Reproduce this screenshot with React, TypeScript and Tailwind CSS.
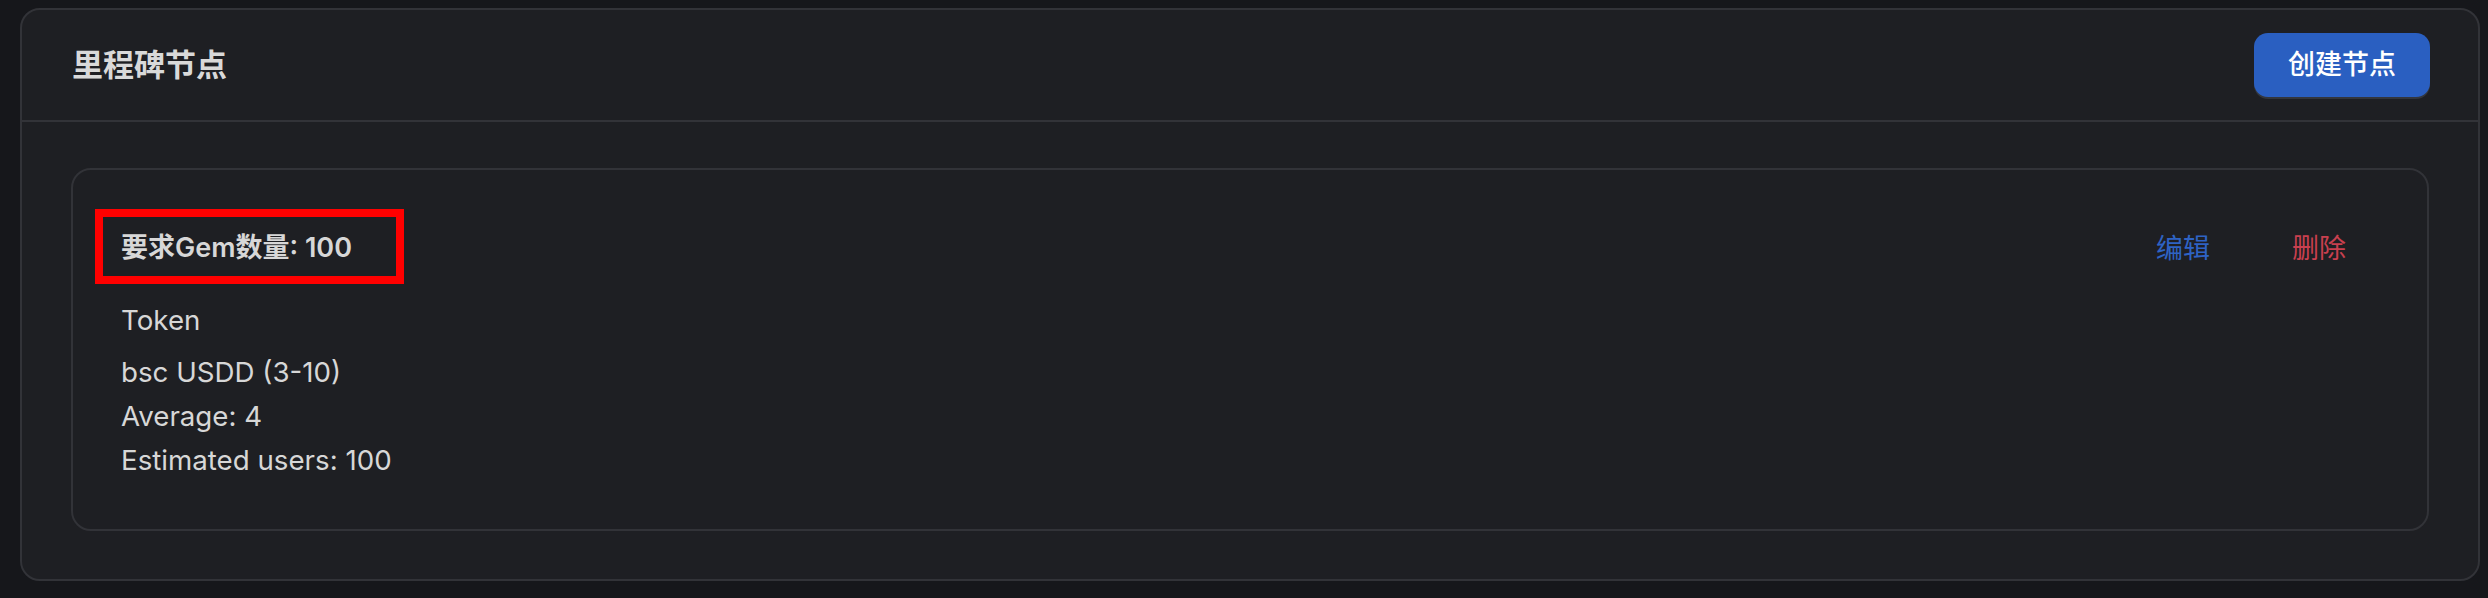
import React from 'react'

const font = { fontFamily: '"Inter", "Noto Sans CJK SC", sans-serif' }

export default function App() {
  return (
    <div className="min-h-[598px] w-full bg-[#16171b] pt-[8px] pb-[17px] pl-[20px] pr-[8px]" style={font}>
      <div className="rounded-[20px] border-2 border-[#323338] bg-[#1e1f23]">
        {/* header */}
        <div className="flex h-[112px] items-center justify-between border-b-2 border-[#323338] pl-[50px] pr-[48px]">
          <h2 className="text-[31px] font-bold text-[#d9d9d9]">里程碑节点</h2>
          <button className="h-[64px] w-[176px] rounded-[14px] bg-[#2a5fc1] text-[27px] font-medium text-white shadow-[0_2px_0_#33363d]">
            创建节点
          </button>
        </div>

        <div className="px-[49px] pt-[46px] pb-[48px]">
          <div className="rounded-[20px] border-2 border-[#323338] px-[48px] pt-[48px] pb-[47px]">
            <div className="flex h-[62px] items-center justify-between">
              <div className="-ml-[26px] mb-[5px] border-[8px] border-[#ff0000] pl-[18px] pr-[44px] pt-[9px] pb-[6px]">
                <span className="block text-[27px] font-semibold leading-[44px] text-[#d7d7d7]">要求Gem数量: 100</span>
              </div>
              <div className="flex items-center gap-[26px] pr-[5px]">
                <button className="px-[28px] py-[9px] text-[27px] leading-[44px] text-[#2e63c4]">编辑</button>
                <button className="px-[28px] py-[9px] text-[27px] leading-[44px] text-[#c9404f]">删除</button>
              </div>
            </div>
            <div className="mt-[18px] text-[27.7px] leading-[44px] text-[#d7d7d7]">
              <div className="mb-[8px]">Token</div>
              <div>bsc USDD (3-10)</div>
              <div>Average: 4</div>
              <div>Estimated users: 100</div>
            </div>
          </div>
        </div>
      </div>
    </div>
  )
}
